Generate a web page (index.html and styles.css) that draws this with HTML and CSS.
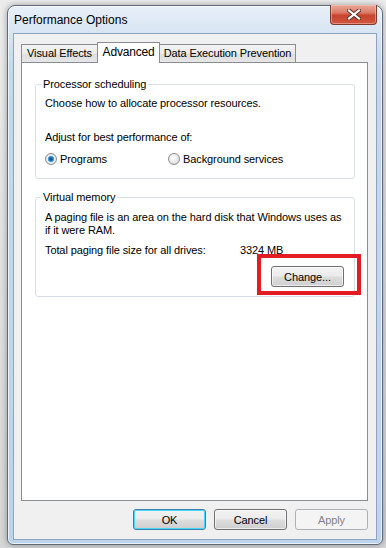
FILE: index.html
```html
<!DOCTYPE html>
<html lang="en">
<head>
    <meta charset="UTF-8">
    <meta name="viewport" content="width=device-width, initial-scale=1.0">
    <title>Performance Options</title>
    <link rel="stylesheet" href="styles.css">
</head>
<body>
    <div class="window">
        <div class="titlebar">
            <span class="title">Performance Options</span>
            <button class="close-button" aria-label="Close">
                <svg width="14" height="11" viewBox="0 0 14 11">
                    <path d="M2 1.5 L12 9.5 M12 1.5 L2 9.5" stroke="#5a2a22" stroke-width="4" stroke-linecap="square"/>
                    <path d="M2 1.5 L12 9.5 M12 1.5 L2 9.5" stroke="#ffffff" stroke-width="2.2" stroke-linecap="square"/>
                </svg>
            </button>
        </div>

        <div class="client">
            <div class="tabs">
                <div class="tab visual">Visual Effects</div>
                <div class="tab active">Advanced</div>
                <div class="tab dep">Data Execution Prevention</div>
            </div>

            <div class="tab-panel">
                <fieldset class="group">
                    <legend>Processor scheduling</legend>
                    <p class="line choose">Choose how to allocate processor resources.</p>
                    <p class="line adjust">Adjust for best performance of:</p>
                    <div class="radio-row">
                        <label class="radio-item"><span class="radio checked"></span>Programs</label>
                        <label class="radio-item"><span class="radio"></span>Background services</label>
                    </div>
                </fieldset>

                <fieldset class="group memory">
                    <legend>Virtual memory</legend>
                    <p class="line small paging">A paging file is an area on the hard disk that Windows uses as<br>if it were RAM.</p>
                    <div class="line small total">
                        <span class="total-label">Total paging file size for all drives:</span>
                        <span>3324 MB</span>
                    </div>
                    <div class="change-row">
                        <span class="change-wrap">
                            <button class="win-button change">Change...</button>
                            <span class="highlight"></span>
                        </span>
                    </div>
                </fieldset>
            </div>

            <div class="dialog-buttons">
                <button class="win-button default">OK</button>
                <button class="win-button">Cancel</button>
                <button class="win-button disabled">Apply</button>
            </div>
        </div>
    </div>
</body>
</html>
```

FILE: styles.css
```css
:root {
    --text-color: #000000;
    --tab-border: #898c95;
    --group-border: #d5dfe5;
    --client-bg: #f0f0f0;
    --highlight: #e31b23;
}

* {
    box-sizing: border-box;
}

body {
    margin: 0;
    padding: 5px 0 0 7px;
    width: 386px;
    height: 548px;
    overflow: hidden;
    background: linear-gradient(180deg, #ececec 0%, #d6d6d6 100%);
    font-family: "Liberation Sans", Arial, sans-serif;
    font-size: 11px;
    letter-spacing: -0.1px;
    color: var(--text-color);
}

.window {
    width: 376px;
    height: 540px;
    border: 1px solid #5f6b78;
    border-radius: 8px 8px 6px 6px;
    background: linear-gradient(180deg, #e8eff8 0%, #d7e4f3 28px, #c3d8ef 60px, #bcd4ee 100%);
    box-shadow: 0 0 6px rgba(0, 0, 0, 0.35), inset 0 0 0 1px rgba(255, 255, 255, 0.7);
    display: flex;
    flex-direction: column;
}

.titlebar {
    height: 27px;
    padding: 0 5px 0 6px;
    display: flex;
    justify-content: space-between;
    align-items: flex-start;
}

.title {
    padding-top: 7px;
    line-height: 14px;
    font-size: 12px;
    letter-spacing: 0;
}

.close-button {
    margin-top: -1px;
    width: 47px;
    height: 20px;
    padding: 0;
    border: 1px solid #7b3a30;
    border-top: none;
    border-radius: 0 0 4px 4px;
    background: linear-gradient(180deg, #eaa999 0%, #dc7b68 40%, #c8442d 55%, #d0563f 100%);
    box-shadow: inset 0 0 0 1px rgba(255, 200, 190, 0.5);
    display: flex;
    align-items: center;
    justify-content: center;
}

.client {
    margin: 0 5px 0 5px;
    height: 507px;
    background: var(--client-bg);
    border: 1px solid #8ea3bd;
    padding: 8px 7px 0 7px;
}

.tabs {
    display: flex;
    align-items: flex-end;
    height: 20px;
}

.tab {
    height: 18px;
    border: 1px solid var(--tab-border);
    border-bottom: none;
    background: linear-gradient(180deg, #f3f3f3 0%, #ebebeb 50%, #dedede 51%, #e6e6e6 100%);
    line-height: 17px;
    text-align: center;
    margin-right: -1px;
    white-space: nowrap;
}

.tab.visual {
    width: 77px;
}

.tab.dep {
    width: 137px;
}

.tab.active {
    position: relative;
    z-index: 1;
    width: 63px;
    height: 21px;
    margin-bottom: -1px;
    background: #ffffff;
    line-height: 18px;
    font-size: 12px;
    letter-spacing: -0.2px;
}

.tab-panel {
    width: 347px;
    height: 439px;
    border: 1px solid var(--tab-border);
    background: #ffffff;
    padding-top: 14px;
}

.group {
    margin: 0 12px 0 13px;
    padding: 0 10px 12px 9px;
    border: 1px solid var(--group-border);
    border-radius: 3px;
}

.group legend {
    padding: 0 2px;
    margin-left: -4px;
    line-height: 14px;
}

.line {
    margin: 0;
    line-height: 14px;
    white-space: nowrap;
}

.choose {
    margin-top: 5px;
}

.adjust {
    margin-top: 20px;
}

.radio-row {
    margin-top: 8px;
    display: grid;
    grid-template-columns: 123px 1fr;
    line-height: 14px;
}

.radio-item {
    display: flex;
    align-items: center;
}

.radio {
    width: 12px;
    height: 12px;
    margin-right: 3px;
    border-radius: 50%;
    border: 1px solid #8e8f8f;
    background: radial-gradient(circle at 40% 35%, #ffffff 0%, #e6e6e6 60%, #c9c9c9 100%);
}

.radio.checked {
    background: radial-gradient(circle, #0f3f6e 0%, #2c7fc4 30%, #5fb0e8 42%, #e8eef4 50%, #d2d6da 100%);
}

.memory {
    margin-top: 11px;
    padding-bottom: 9px;
}

.small {
    line-height: 13px;
}

.paging {
    margin-top: 7px;
}

.total {
    margin-top: 7px;
    display: flex;
}

.total-label {
    width: 195px;
}

.change-row {
    margin-top: 9px;
    display: flex;
    justify-content: flex-end;
}

.change-wrap {
    position: relative;
    display: block;
}

.highlight {
    position: absolute;
    top: -12px;
    left: -14px;
    right: -17px;
    bottom: -8px;
    border: 4px solid var(--highlight);
}

.win-button {
    width: 73px;
    height: 21px;
    padding: 0;
    border: 1px solid #707070;
    border-radius: 3px;
    background: linear-gradient(180deg, #f2f2f2 0%, #ebebeb 48%, #dddddd 52%, #cfcfcf 100%);
    box-shadow: inset 0 0 0 1px rgba(255, 255, 255, 0.6);
    font-family: inherit;
    font-size: 11px;
    letter-spacing: -0.1px;
    color: #000;
}

.win-button.default {
    border-color: #3c7fb1;
    box-shadow: inset 0 0 0 1px #48d7fb;
}

.win-button.disabled {
    border-color: #adb2b5;
    background: #f4f4f4;
    box-shadow: none;
    color: #838383;
}

.dialog-buttons {
    margin-top: 8px;
    display: flex;
    justify-content: flex-end;
    gap: 8px;
    width: 347px;
}
```
